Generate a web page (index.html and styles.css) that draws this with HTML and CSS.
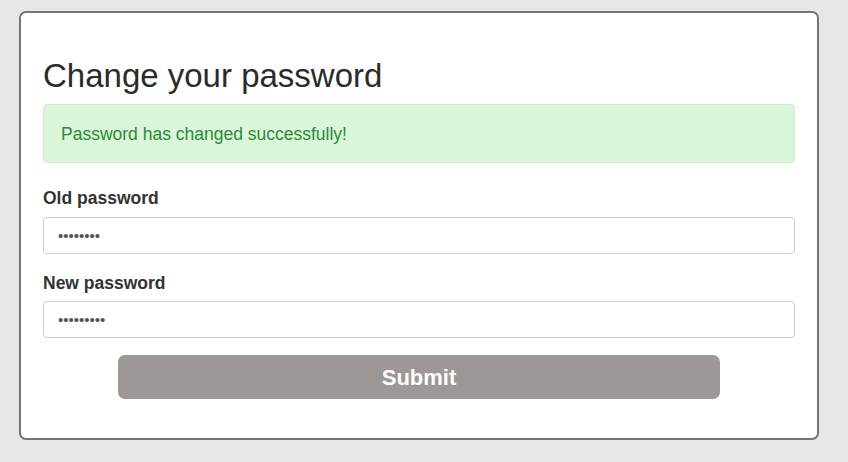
FILE: index.html
```html
<!DOCTYPE html>
<html>
<head>
<meta charset="utf-8">
<link rel="stylesheet" href="styles.css">
</head>
<body>
<div class="card">
  <h2 class="title">Change your password</h2>
  <div class="alert">Password has changed successfully!</div>
  <form class="form">
    <div class="group">
      <label class="label">Old password</label>
      <input class="input" type="password" value="12345678">
    </div>
    <div class="group">
      <label class="label">New password</label>
      <input class="input" type="password" value="123456789">
    </div>
    <div class="actions">
      <button class="submit" type="button">Submit</button>
    </div>
  </form>
</div>
</body>
</html>
```
FILE: styles.css
```css
html, body {
  margin: 0;
  background: #e6e6e6;
}
body {
  padding: 11px 19px;
  font-family: "Liberation Sans", Arial, sans-serif;
  color: #333;
  font-size: 17.5px;
  line-height: 25px;
}
.card {
  box-sizing: border-box;
  width: 800px;
  height: 429px;
  background: #fff;
  border: 2px solid #767474;
  border-radius: 7px;
  padding: 45px 22px 0 22px;
}
.title {
  margin: 0 0 10px 0;
  font-size: 33px;
  font-weight: normal;
  line-height: 36px;
  color: #2b2b2b;
}
.alert {
  box-sizing: border-box;
  height: 59px;
  padding: 17px 17px 15px;
  background: #dbf5d8;
  border: 1px solid #cdeec9;
  border-radius: 4px;
  color: #2a8a3c;
}
.form {
  margin: 0;
  padding-top: 23px;
}
.group {
  display: flex;
  flex-direction: column;
  margin-bottom: 17px;
}
.group + .group {
  margin-bottom: 17px;
}
.group + .group .label {
  margin-bottom: 5px;
}
.label {
  font-weight: bold;
  margin-bottom: 6px;
  color: #333;
}
.input {
  box-sizing: border-box;
  height: 37px;
  width: 100%;
  border: 1px solid #ccc;
  border-radius: 4px;
  padding: 0 14px;
  font-family: "Liberation Sans", Arial, sans-serif;
  font-size: 15px;
  color: #555;
  outline: none;
}
.actions {
  display: flex;
  justify-content: center;
}
.submit {
  width: 602px;
  height: 44px;
  border: none;
  border-radius: 7px;
  background: #9d9796;
  color: #fff;
  padding-top: 2px;
  font-family: "Liberation Sans", Arial, sans-serif;
  font-size: 22px;
  font-weight: bold;
}
```
